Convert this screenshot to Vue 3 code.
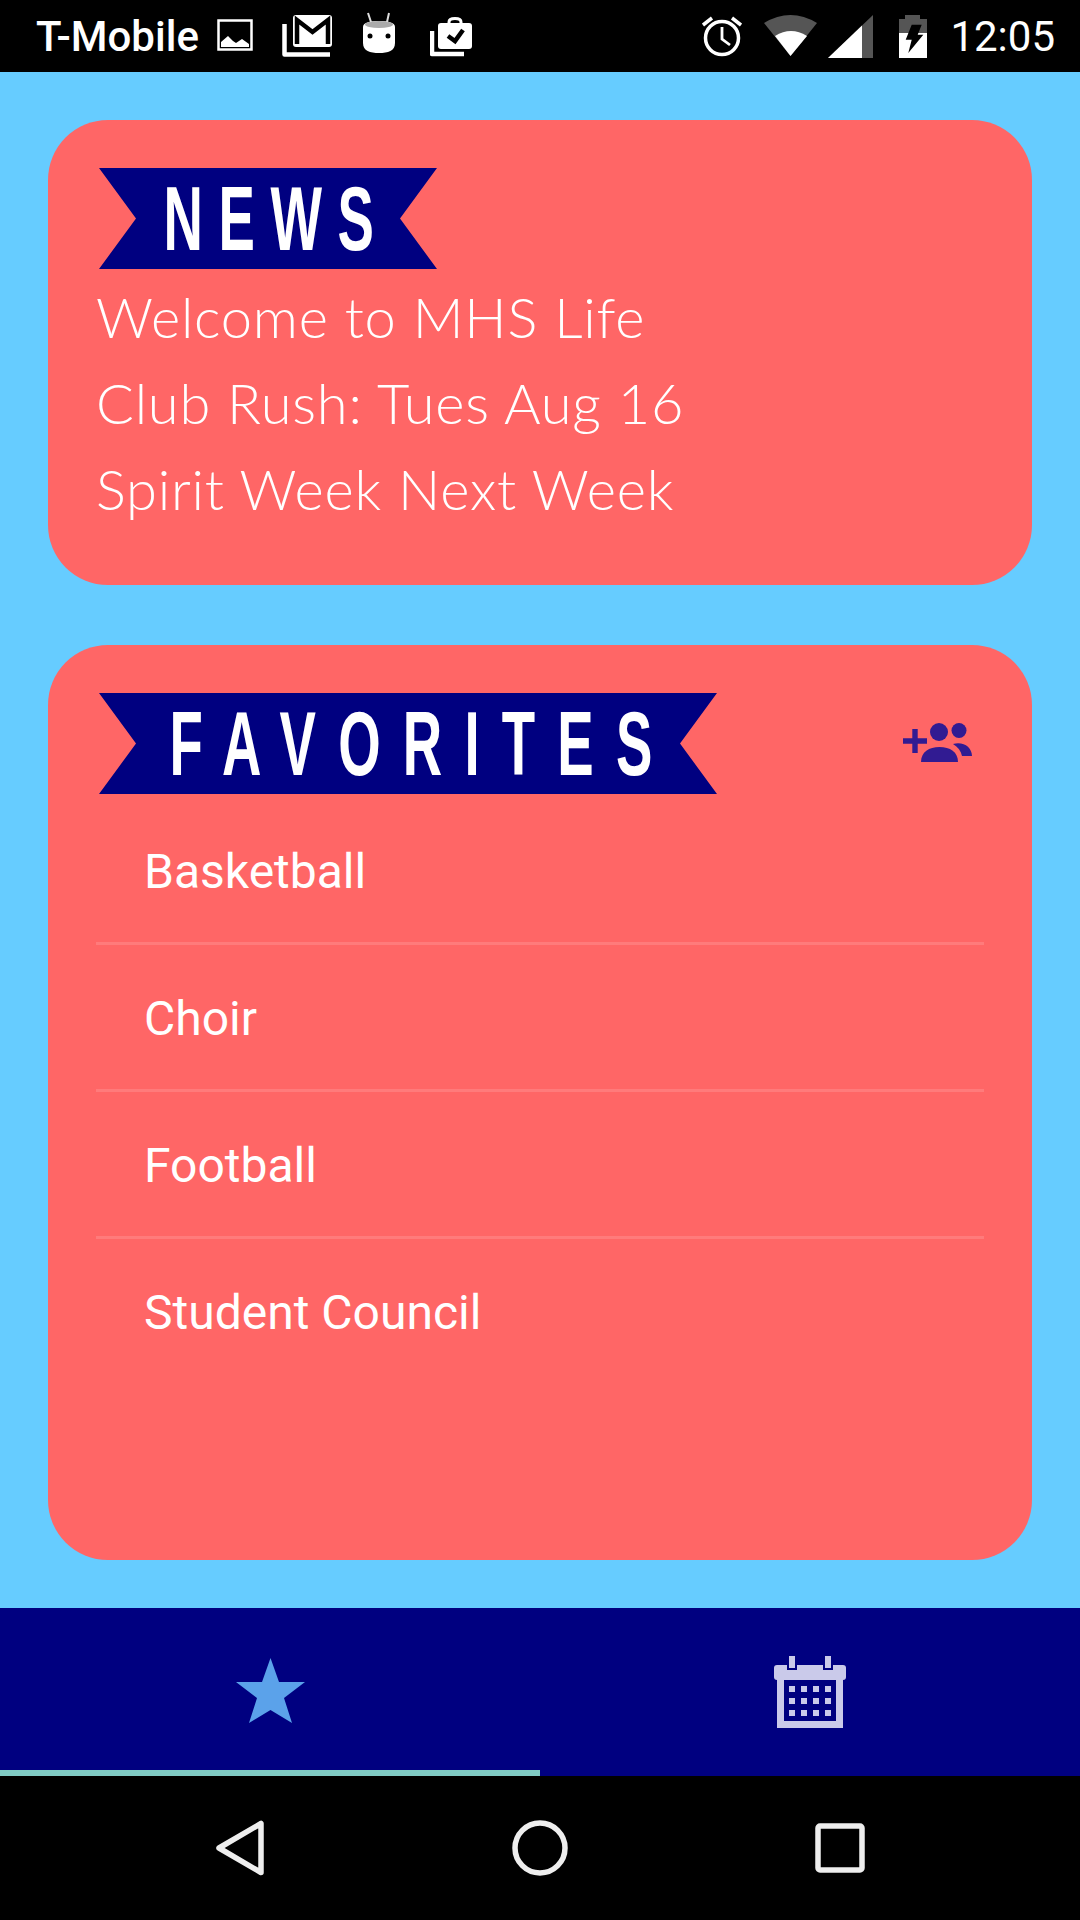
<template>
  <div class="phone">
    <div class="status-bar">
      <span class="carrier">T-Mobile</span>
      <!-- notification icons -->
      <svg class="st st-image" width="36" height="72" viewBox="0 -19 36 72">
        <rect x="1.5" y="1.5" width="33" height="29" fill="none" stroke="#fff" stroke-width="2.5" />
        <path d="M4 28V23L11 17L16 22L19 24L25 20L32 25V28Z" fill="#fff" />
      </svg>
      <svg class="st st-gmail" width="50" height="72" viewBox="0 -15 50 72">
        <path d="M2.5 9V39.5H48" fill="none" stroke="#fff" stroke-width="4.5" stroke-linejoin="round" />
        <rect x="11" y="0" width="39" height="32" rx="3" fill="#fff" />
        <path d="M15 29V5L30.5 17L46 5V29" fill="none" stroke="#000" stroke-width="4.5" />
      </svg>
      <svg class="st st-android" width="32" height="72" viewBox="0 -13 32 72">
        <path d="M0 14C0 9 8 8 16 8S32 9 32 14V30C32 38 25 40 16 40S0 38 0 30Z" fill="#fff" />
        <ellipse cx="16" cy="11.5" rx="14" ry="3.5" fill="#aaa" />
        <path d="M5 0L8 9M26 0L24 9" stroke="#ddd" stroke-width="2" />
        <circle cx="7" cy="23" r="2.5" fill="#000" />
        <circle cx="25" cy="23" r="2.5" fill="#000" />
      </svg>
      <svg class="st st-work" width="42" height="72" viewBox="0 -17 42 72">
        <path d="M2 14V37H34" fill="none" stroke="#fff" stroke-width="4.5" stroke-linejoin="round" />
        <path d="M19 8V5C19 2.5 21 1.5 25 1.5S31 2.5 31 5V8" fill="none" stroke="#fff" stroke-width="3" />
        <rect x="8" y="6" width="34" height="26" rx="3" fill="#fff" />
        <path d="M18 19L25 24L33 13" fill="none" stroke="#000" stroke-width="4.5" />
      </svg>
      <div class="status-right">
        <svg class="st st-alarm" width="40" height="72" viewBox="0 -15 40 72">
          <circle cx="20" cy="23" r="16.5" fill="none" stroke="#fff" stroke-width="3.5" />
          <path d="M20 12V24L28 30" fill="none" stroke="#fff" stroke-width="2.8" />
          <path d="M1 10L10 3M39 10L30 3" stroke="#fff" stroke-width="3.5" />
        </svg>
        <svg class="st st-wifi" width="53" height="72" viewBox="0 -15 53 72">
          <path d="M0 8Q26.5 -8 53 8L26.5 41Z" fill="#555" />
          <path d="M11 21Q27 11 43 21L26.5 41Z" fill="#fff" />
        </svg>
        <svg class="st st-signal" width="45" height="72" viewBox="0 -15 45 72">
          <path d="M0 43L45 0V43Z" fill="#555" />
          <path d="M0 43L34 10.5V43Z" fill="#fff" />
        </svg>
        <svg class="st st-battery" width="28" height="72" viewBox="0 -15 28 72">
          <path d="M6 0H21V4H28V43H0V4H6Z" fill="#555" />
          <path d="M0 18H28V43H0Z" fill="#fff" />
          <path d="M12.7 9.7H22.7L18.7 19.7H24.3L9.3 38L12.7 24.7H6.7Z" fill="#000" />
        </svg>
        <span class="clock">12:05</span>
      </div>
    </div>

    <main class="content">
      <section class="card news-card">
        <div class="ribbon ribbon-news"><span class="ribbon-text news-title">NEWS</span></div>
        <div class="news-lines">
          <p v-for="line in newsLines" :key="line" class="news-line">{{ line }}</p>
        </div>
      </section>

      <section class="card favorites-card">
        <div class="favorites-head">
          <div class="ribbon ribbon-favorites"><span class="ribbon-text favorites-title">FAVORITES</span></div>
          <svg class="group-add" width="70" height="40" viewBox="0 0 70 40">
            <path d="M0 15.2H9.300V6H14.700V15.200H24V20.800H14.700V30H9.300V20.800H0Z" fill="#311b92" />
            <circle cx="36" cy="9" r="9" fill="#311b92" />
            <circle cx="56" cy="7.5" r="7.5" fill="#311b92" />
            <path d="M18 39C18 29 26 24 36.500 24S55 29 55 39Z" fill="#311b92" />
            <path d="M50 21C60 18 69 24 69 33H59C58 28 55 24 50 21Z" fill="#311b92" />
          </svg>
        </div>
        <ul class="favorites-list">
          <li v-for="item in favorites" :key="item" class="favorite-row">{{ item }}</li>
        </ul>
      </section>
    </main>

    <div class="tabs">
      <div class="tab tab-active">
        <svg class="tab-star" width="69" height="65" viewBox="0 0 69 65">
          <polygon points="34.5,0 43,24 69,24 48,40 56,65 34.5,52 13,65 21,40 0,24 26,24" fill="#5ba2ea" />
        </svg>
      </div>
      <div class="tab">
        <svg width="72" height="72" viewBox="0 0 72 72">
          <path d="M3 18H69V72H3ZM10 24V65H62V24Z" fill="#cacaea" fill-rule="evenodd" />
          <rect x="0" y="9" width="72" height="15" rx="3" fill="#cacaea" />
          <rect x="13" y="0" width="10" height="14" fill="#000080" />
          <rect x="49" y="0" width="10" height="14" fill="#000080" />
          <rect x="15" y="0" width="6" height="12" fill="#cacaea" />
          <rect x="51" y="0" width="6" height="12" fill="#cacaea" />
          <template v-for="y in [30, 42, 54]" :key="y">
            <rect v-for="x in [15, 27, 39, 51]" :key="x" :x="x" :y="y" width="6" height="6" fill="#cacaea" />
          </template>
        </svg>
      </div>
    </div>

    <div class="nav-bar">
      <svg width="48" height="56" viewBox="0 0 48 56">
        <path d="M45 3.500V52.500L3 28Z" fill="none" stroke="#eee" stroke-width="5.500" stroke-linejoin="round" />
      </svg>
      <svg width="56" height="56" viewBox="0 0 56 56">
        <circle cx="28" cy="28" r="25" fill="none" stroke="#eee" stroke-width="5.500" />
      </svg>
      <svg width="50" height="50" viewBox="0 0 50 50">
        <rect x="3" y="3" width="44" height="44" rx="2" fill="none" stroke="#eee" stroke-width="5.500" />
      </svg>
    </div>
  </div>
</template>

<script setup>
const newsLines = ['Welcome to MHS Life', 'Club Rush: Tues Aug 16', 'Spirit Week Next Week']
const favorites = ['Basketball', 'Choir', 'Football', 'Student Council']
</script>

<style scoped>
.phone {
  width: 1080px;
  height: 1920px;
  display: flex;
  flex-direction: column;
  background: #66ccff;
  font-family: Roboto, sans-serif;
  overflow: hidden;
}

/* Status bar */
.status-bar {
  height: 72px;
  flex: none;
  display: flex;
  align-items: center;
  padding: 0 25px 0 36px;
  background: #000;
  color: #fff;
}

.st {
  flex: none;
  display: block;
}

.carrier {
  font-size: 42px;
  font-weight: 500;
  width: 181px;
  white-space: nowrap;
}

.st-gmail {
  margin-left: 29px;
}

.st-android {
  margin-left: 31px;
}

.st-work {
  margin-left: 35px;
}

.status-right {
  margin-left: auto;
  display: flex;
  align-items: center;
}

.st-wifi {
  margin-left: 22px;
}

.st-signal {
  margin-left: 11px;
}

.st-battery {
  margin-left: 26px;
}

.clock {
  margin-left: 23px;
  font-size: 42px;
}

/* Cards */
.content {
  flex: 1;
  display: flex;
  flex-direction: column;
  gap: 60px;
  padding: 48px;
}

.card {
  background: #ff6666;
  border-radius: 60px;
  padding: 48px;
  color: #fff;
}

.news-card {
  height: 465px;
  box-sizing: border-box;
}

.favorites-card {
  flex: 1;
}

.ribbon {
  height: 101px;
  margin-left: 3px;
  background: #000080;
  display: flex;
  align-items: center;
  justify-content: center;
  clip-path: polygon(0 0, 100% 0, calc(100% - 37px) 50%, 100% 100%, 0 100%, 37px 50%);
}

.ribbon-news {
  width: 338px;
}

.ribbon-favorites {
  width: 618px;
}

.ribbon-text {
  font-family: "Liberation Sans", sans-serif;
  font-weight: 700;
  font-size: 91px;
  line-height: 101px;
  white-space: nowrap;
  transform: scaleX(0.6);
}

.news-title {
  letter-spacing: 26px;
  margin-right: -16px;
}

.favorites-title {
  letter-spacing: 37px;
  margin-right: -27px;
}

.news-lines {
  padding-top: 5px;
}

.news-line {
  margin: 0;
  font-family: Lato, sans-serif;
  font-weight: 300;
  font-size: 56px;
  letter-spacing: 0.8px;
  line-height: 86px;
  white-space: nowrap;
}

.favorites-head {
  display: flex;
  align-items: flex-start;
  justify-content: space-between;
}

.group-add {
  margin: 30px 11px 0 0;
}

.favorites-list {
  list-style: none;
  margin: 4px 0 0;
  padding: 0;
}

.favorite-row {
  height: 147px;
  box-sizing: border-box;
  display: flex;
  align-items: center;
  padding: 3px 0 0 48px;
  font-size: 48px;
  border-bottom: 3px solid #ff7b7b;
}

.favorite-row:last-child {
  border-bottom-color: transparent;
}

/* Bottom tabs */
.tabs {
  height: 168px;
  flex: none;
  display: flex;
  background: #000080;
}

.tab {
  flex: 1;
  display: flex;
  align-items: center;
  justify-content: center;
}

.tab-active {
  box-shadow: inset 0 -6px 0 #80cbc4;
}

.tab-star {
  margin-bottom: 3px;
}

/* Android nav */
.nav-bar {
  height: 144px;
  flex: none;
  display: grid;
  grid-template-columns: repeat(3, 300px);
  justify-content: center;
  justify-items: center;
  align-items: center;
  background: #000;
}
</style>
